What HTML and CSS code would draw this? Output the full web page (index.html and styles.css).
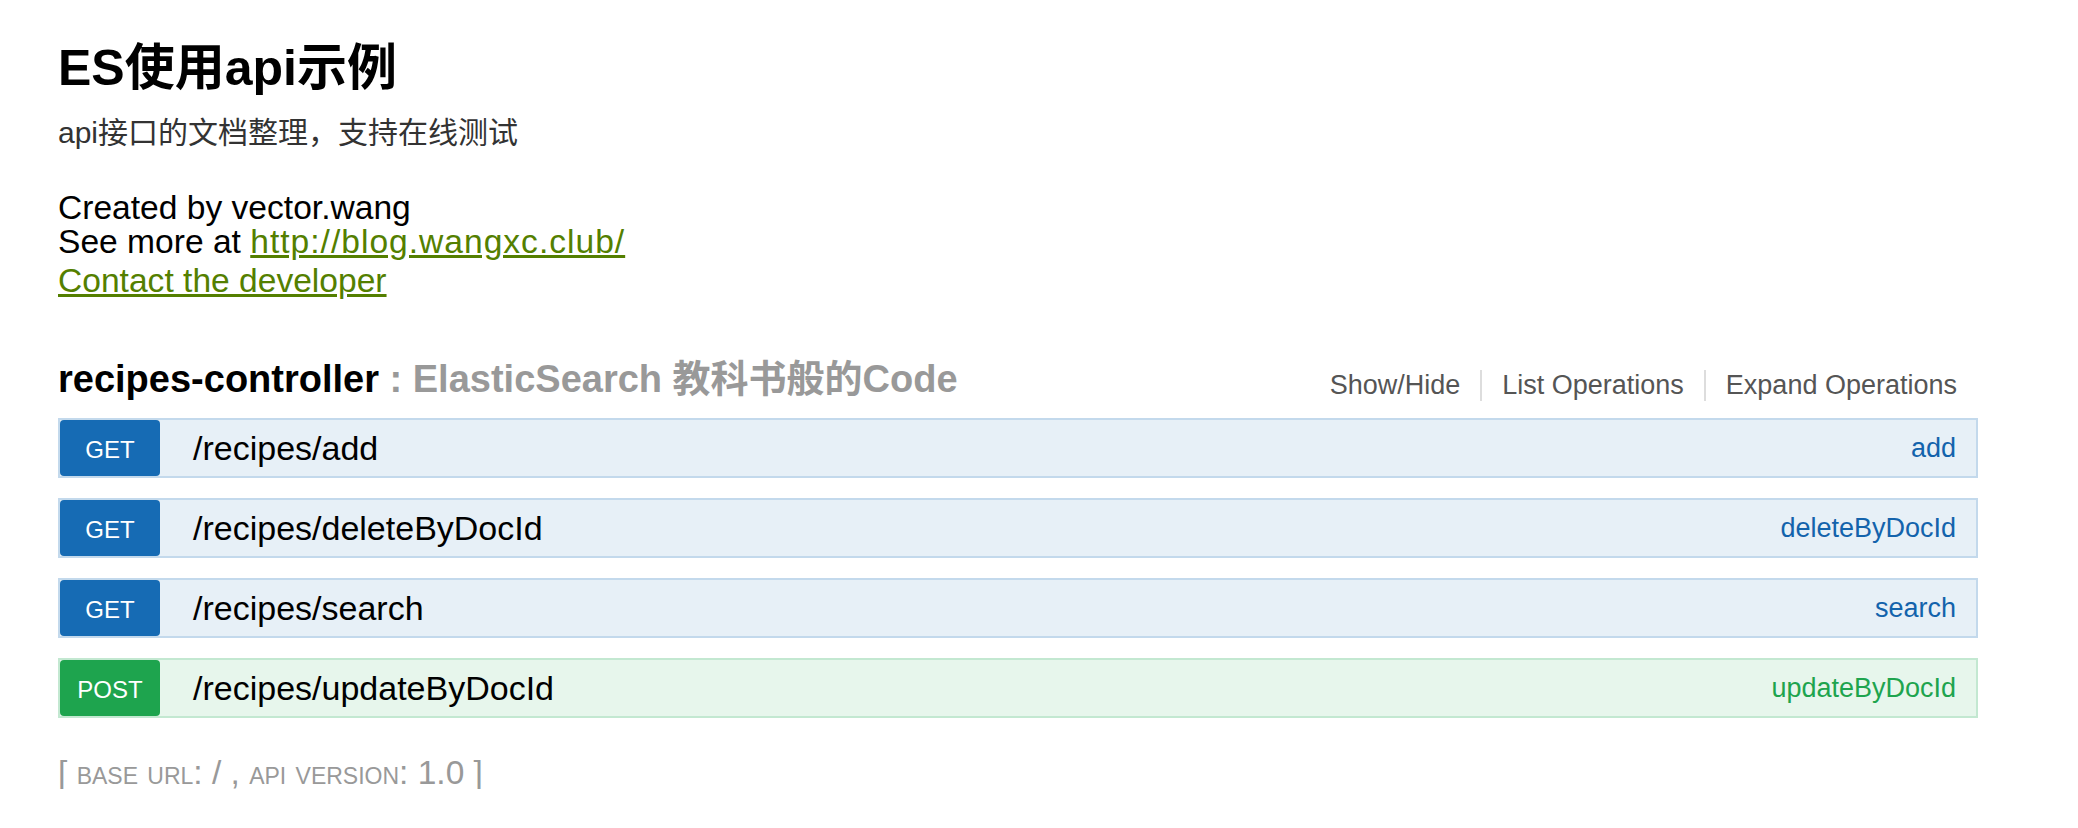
FILE: index.html
```html
<!DOCTYPE html>
<html lang="zh">
<head>
<meta charset="utf-8">
<title>ES使用api示例</title>
<link rel="stylesheet" href="styles.css">
</head>
<body>
<div class="wrap">
  <div class="info">
    <div class="info-title">ES使用api示例</div>
    <div class="info-desc">api接口的文档整理，支持在线测试</div>
    <div class="info-name">Created by vector.wang</div>
    <div class="info-url">See more at <a class="url-link" href="#">http://blog.wangxc.club/</a></div>
    <div class="info-email"><a href="#">Contact the developer</a></div>
  </div>
  <div class="resource">
    <div class="res-heading">
      <h2 class="res-title">recipes-controller <span class="res-desc">: ElasticSearch 教科书般的Code</span></h2>
      <ul class="options">
        <li>Show/Hide</li>
        <li>List Operations</li>
        <li>Expand Operations</li>
      </ul>
    </div>
    <ul class="ops">
      <li class="op op-get"><span class="method">GET</span><span class="path">/recipes/add</span><span class="nick">add</span></li>
      <li class="op op-get"><span class="method">GET</span><span class="path">/recipes/deleteByDocId</span><span class="nick">deleteByDocId</span></li>
      <li class="op op-get"><span class="method">GET</span><span class="path">/recipes/search</span><span class="nick">search</span></li>
      <li class="op op-post"><span class="method">POST</span><span class="path">/recipes/updateByDocId</span><span class="nick">updateByDocId</span></li>
    </ul>
  </div>
  <div class="footer">[ <span class="sc">base url</span>: / , <span class="sc">api version</span>: 1.0 ]</div>
</div>
</body>
</html>
```
FILE: styles.css
```css
* { box-sizing: border-box; }
html, body { margin: 0; padding: 0; background: #fff; }
body {
  font-family: "Liberation Sans", "Noto Sans CJK SC", sans-serif;
  color: #000;
}
.wrap { width: 1920px; margin-left: 58px; }

.info { padding-top: 38px; }
.info-title { font-size: 50px; line-height: 60px; font-weight: bold; }
.info-desc { font-size: 30px; line-height: 36px; margin-top: 17px; color: #333; }
.info-name { font-size: 33.6px; line-height: 33.6px; margin-top: 40px; }
.info-url { font-size: 33.6px; line-height: 33.6px; }
.info-email { font-size: 33.6px; line-height: 33.6px; margin-top: 6px; }
a { color: #547f00; text-decoration: underline; }
.url-link { letter-spacing: 1px; }

.resource { margin-top: 59px; }
.res-heading {
  display: flex;
  justify-content: space-between;
  align-items: flex-start;
  margin-bottom: 17px;
}
.res-title { margin: 0; font-size: 38px; line-height: 44px; font-weight: bold; color: #000; }
.res-desc { color: #999; }
.options { list-style: none; margin: 13px 0 0; padding: 0; display: flex; }
.options li {
  font-size: 27px;
  line-height: 27px;
  padding: 2px 20px;
  border-right: 2px solid #ddd;
  color: #555;
}
.options li:first-child { padding-left: 16px; }
.options li:last-child { border-right: none; padding-right: 21px; }

.ops {
  list-style: none;
  margin: 0;
  padding: 0;
  display: flex;
  flex-direction: column;
  gap: 20px;
}
.op {
  display: flex;
  align-items: center;
  height: 60px;
  border: 2px solid;
}
.op-get { background: #e7f0f7; border-color: #c3d9ec; }
.op-post { background: #e7f6ec; border-color: #c3e8d1; }
.method {
  width: 100px;
  height: 56px;
  display: flex;
  align-items: center;
  justify-content: center;
  padding-top: 5px;
  color: #fff;
  font-size: 24px;
  line-height: 24px;
  border-radius: 4px;
}
.op-get .method { background: #166bb4; }
.op-post .method { background: #1ea44e; }
.path { margin-left: 33px; font-size: 34px; line-height: 34px; color: #000; flex: 1; }
.nick { font-size: 27px; line-height: 27px; padding-right: 20px; padding-top: 2px; }
.op-get .nick { color: #1363ac; }
.op-post .nick { color: #1ea44e; }

.footer { margin-top: 39px; font-size: 33.5px; line-height: 32px; color: #999; }
.sc { font-variant: small-caps; }
```
